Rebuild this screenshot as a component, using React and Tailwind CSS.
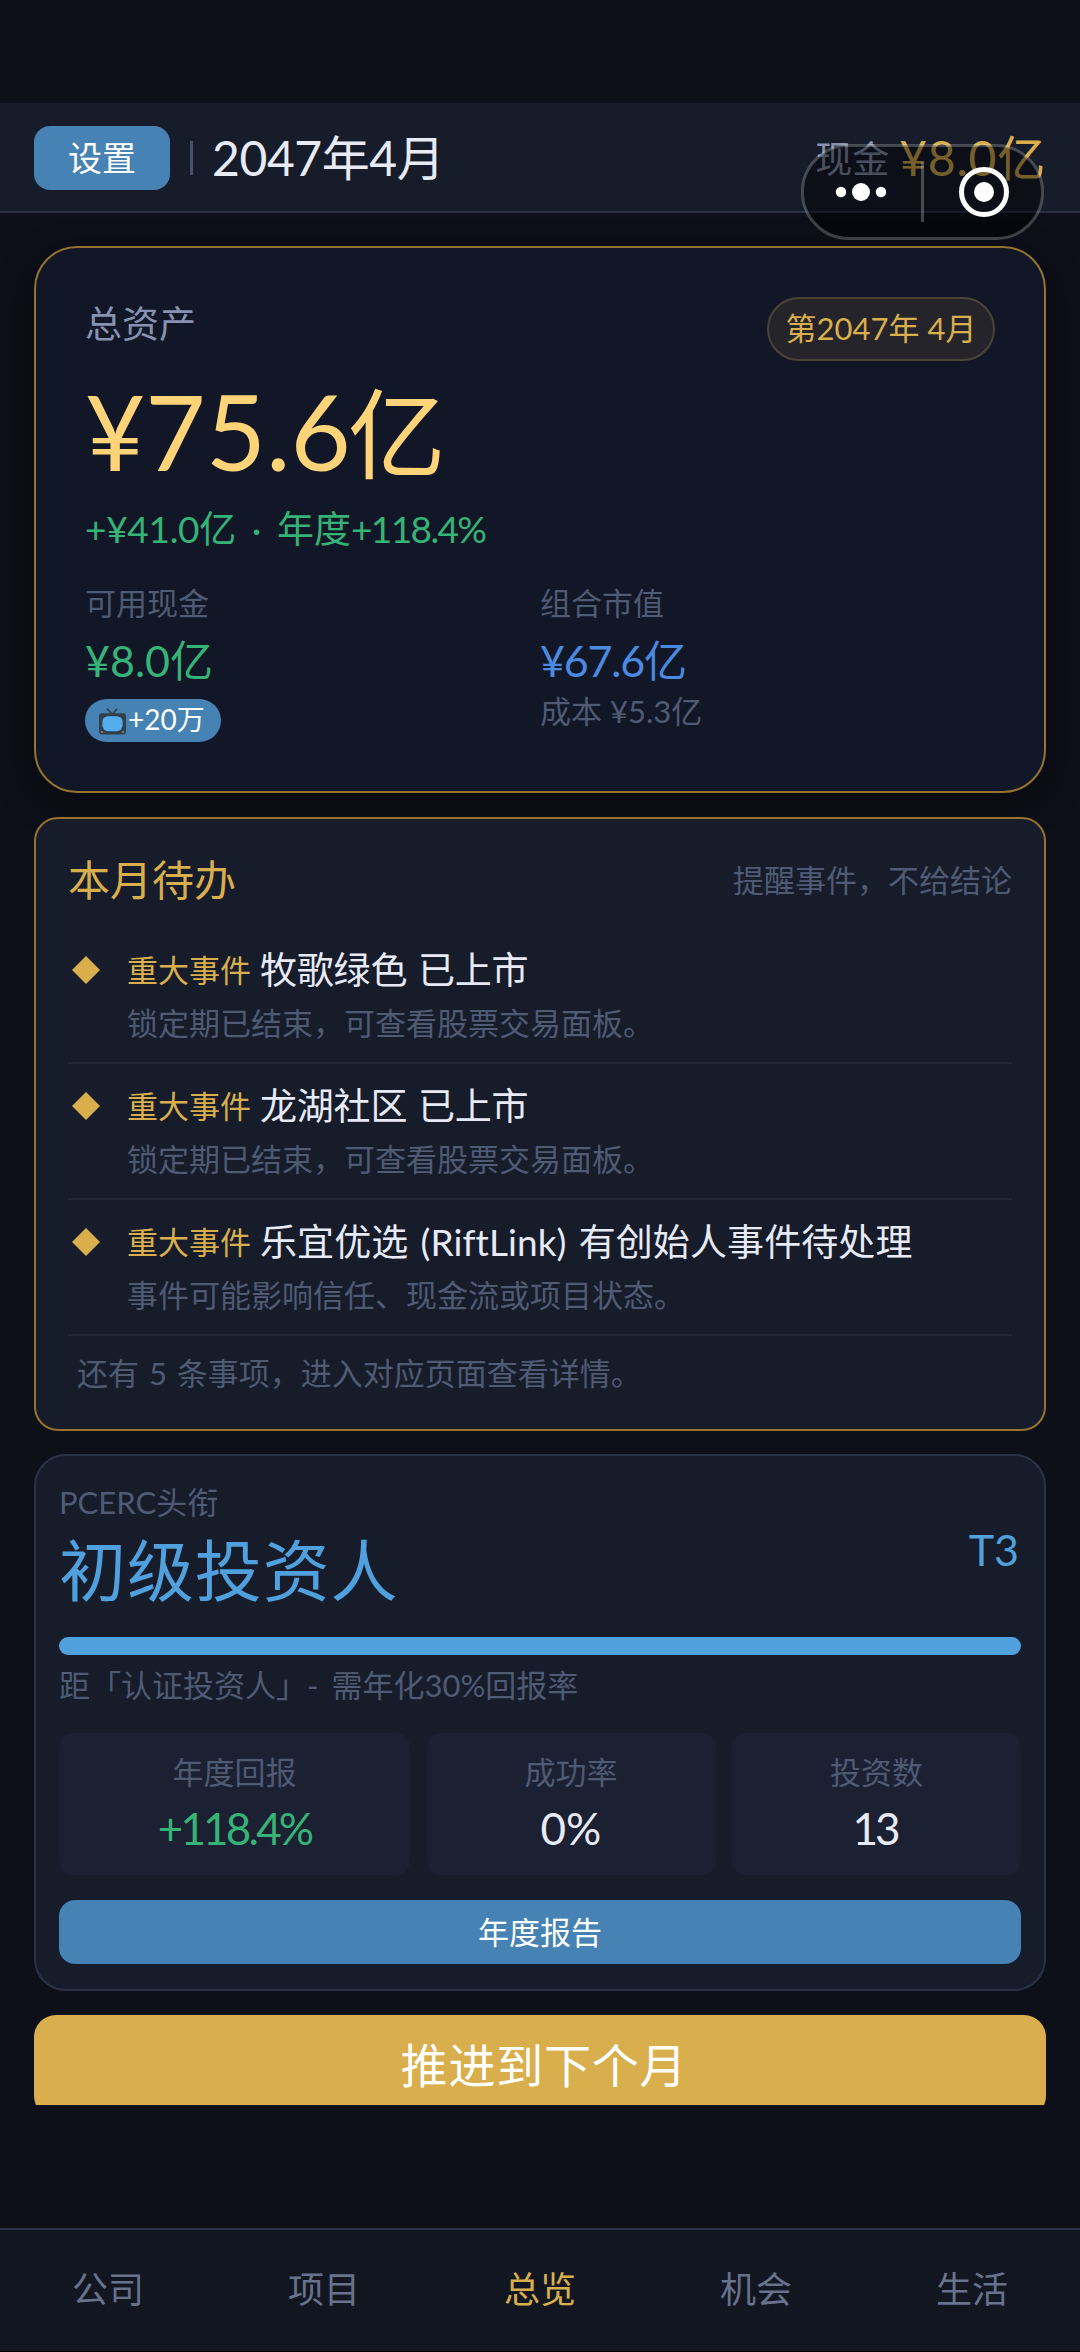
import React, { useState } from "react";

const todos = [
  {
    title: "牧歌绿色 已上市",
    desc: "锁定期已结束，可查看股票交易面板。",
    style: "tracking-[-0.2px] [word-spacing:1.5px]",
  },
  {
    title: "龙湖社区 已上市",
    desc: "锁定期已结束，可查看股票交易面板。",
    style: "tracking-[-0.2px] [word-spacing:1.5px]",
  },
  {
    title: "乐宜优选 (RiftLink) 有创始人事件待处理",
    desc: "事件可能影响信任、现金流或项目状态。",
    style: "tracking-[0.1px] [word-spacing:2.5px]",
  },
];

const stats = [
  {
    label: "年度回报",
    value: "+118.4%",
    style: "text-[#36b376] tracking-[-2.8px]",
  },
  { label: "成功率", value: "0%", style: "text-[#e8eaf6]" },
  { label: "投资数", value: "13", style: "text-[#e8eaf6] tracking-[-3px] pr-[3px]" },
];

const tabs = ["公司", "项目", "总览", "机会", "生活"];

function TvIcon() {
  return (
    <svg className="mr-0.5 h-[28px] w-[27px]" viewBox="0 0 28 28" fill="none">
      <path d="M8 1l6 6 5-6" stroke="#31404d" strokeWidth="1.6" />
      <rect x="0" y="6" width="28" height="22" rx="2.5" fill="#31404d" />
      <rect x="3.5" y="9" width="21" height="15.5" rx="6" fill="#55acee" />
      <circle cx="3" cy="25.3" r="1" fill="#a08f86" />
      <circle cx="25" cy="25.3" r="1" fill="#a08f86" />
    </svg>
  );
}

// Mini program capsule that floats over the header
function Capsule() {
  return (
    <div className="absolute left-[801px] top-[144px]">
      <svg width="243" height="96" viewBox="0 0 243 96" fill="none">
        <rect
          x="1.5"
          y="1.5"
          width="240"
          height="93"
          rx="46.5"
          fill="#000"
          fillOpacity=".45"
          stroke="#fff"
          strokeOpacity=".22"
          strokeWidth="3"
        />
        <path d="M121.5 18v60" stroke="#fff" strokeOpacity=".25" strokeWidth="3" />
        <circle cx="40" cy="48" r="5.2" fill="#fff" />
        <circle cx="60" cy="48" r="9" fill="#fff" />
        <circle cx="80" cy="48" r="5.2" fill="#fff" />
        <circle cx="183" cy="48" r="22.5" stroke="#fff" strokeWidth="5" />
        <circle cx="183" cy="48" r="10" fill="#fff" />
      </svg>
    </div>
  );
}

function Header() {
  return (
    <header className="flex h-[110px] shrink-0 items-center border-b-2 border-[#2b3247] bg-[#161c2a] px-[34px] pt-0.5">
      <button className="h-16 w-[136px] rounded-2xl bg-[#4682b4] text-[34px] leading-none text-white">
        设置
      </button>
      <span className="ml-5 h-[34px] w-[3px] bg-[#475069]" />
      <span className="ml-[19px] text-[48px] leading-none tracking-[-0.4px] text-[#e8eaf6]">
        2047年4月
      </span>
      <span className="ml-auto text-[37px] leading-none text-[#8892b0]">现金</span>
      <span className="ml-2.5 text-[48px] leading-none tracking-[0.8px] text-[#d9ae4c]">
        ¥8.0亿
      </span>
    </header>
  );
}

function AssetCard() {
  return (
    <section className="h-[547px] rounded-[43px] border-2 border-[#94732f] bg-[#111726] px-[49px] pt-[49px] shadow-[0_12px_36px_rgba(0,0,0,0.4)]">
      <div className="flex items-start justify-between">
        <span className="text-[37px] leading-[53px] text-[#8892b0]">总资产</span>
        <span className="flex h-16 w-[228px] items-center justify-center rounded-full border-2 border-[#4a4438] bg-[#25242a] pb-0.5 text-[31px] text-[#d9ae4c]">
          第2047年 4月
        </span>
      </div>
      <div className="mt-[18px] h-[104px] text-[104px] leading-[104px] text-[#ffd479]">
        ¥75.6<span className="ml-[-3px] text-[98px] leading-none">亿</span>
      </div>
      <div className="mt-[21px] flex text-[37px] leading-[50px] text-[#36b376]">
        <span className="tracking-[-0.3px]">+¥41.0亿</span>
        <span className="w-[41px] text-center">·</span>
        <span>年度</span>
        <span className="tracking-[-1.6px]">+118.4%</span>
      </div>
      <div className="mt-[28px] grid grid-cols-2">
        <div>
          <div className="text-[31px] leading-[42px] text-[#4f5a73]">可用现金</div>
          <div className="mt-2 text-[43px] leading-[58px] text-[#36b376]">¥8.0亿</div>
          <div className="mt-[9px] flex h-[43px] w-[136px] items-center rounded-full bg-[#4682b4] pl-[14px] text-[28px] leading-[41px] text-white">
            <TvIcon />
            <span className="pb-0.5">+20万</span>
          </div>
        </div>
        <div>
          <div className="text-[31px] leading-[42px] text-[#4f5a73]">组合市值</div>
          <div className="mt-2 text-[43px] leading-[58px] tracking-[-1.2px] text-[#4a8ae0]">
            ¥67.6亿
          </div>
          <div className="text-[31px] leading-[42px] text-[#4f5a73]">成本 ¥5.3亿</div>
        </div>
      </div>
    </section>
  );
}

function TodoCard() {
  return (
    <section className="mt-6 h-[614px] rounded-3xl border-2 border-[#94732f] bg-[#161c2a] px-8 pt-[31px]">
      <div className="mb-[18px] flex items-center justify-between">
        <h2 className="text-[42px] leading-[60px] text-[#d9ae4c]">本月待办</h2>
        <span className="text-[31px] leading-[60px] text-[#4f5a73]">
          提醒事件，不给结论
        </span>
      </div>
      {todos.map((todo) => (
        <div
          key={todo.title}
          className="flex h-[136px] border-b-2 border-[#1f2636] pt-[17px]"
        >
          <svg className="ml-1 mt-[11px] h-[28px] w-[28px]" viewBox="0 0 28 28">
            <path d="M14 0L28 14L14 28L0 14Z" fill="#d9ae4c" />
          </svg>
          <div className="ml-[27px]">
            <div className="flex items-center leading-[50px]">
              <span className="text-[31px] text-[#d9ae4c]">重大事件</span>
              <span className={`ml-[9px] text-[37px] text-[#e8eaf6] ${todo.style}`}>
                {todo.title}
              </span>
            </div>
            <div className="mt-[7px] text-[31px] leading-[42px] text-[#4f5a73]">
              {todo.desc}
            </div>
          </div>
        </div>
      ))}
      <div className="mt-4 pl-[9px] text-[31px] leading-[42px] text-[#4f5a73] [word-spacing:2px]">
        还有 5 条事项，进入对应页面查看详情。
      </div>
    </section>
  );
}

function RankCard() {
  return (
    <section className="mt-[23px] h-[537px] rounded-[32px] border-2 border-[#2b3247] bg-[#161c2a] px-[23px] pt-[25px]">
      <div className="flex items-start justify-between">
        <div>
          <div className="text-[31px] leading-[42px] text-[#4f5a73]">PCERC头衔</div>
          <div className="mb-0.5 mt-[9px] text-[67px] leading-[76px] tracking-[0.9px] text-[#4fa0dc]">
            初级投资人
          </div>
        </div>
        <span className="mr-0.5 mt-[42px] text-[43px] leading-[54px] text-[#4fa0dc]">
          T3
        </span>
      </div>
      <div className="mt-[27px] h-[18px] rounded-full bg-[#4fa0dc]" />
      <div className="mt-[9px] text-[31px] leading-[42px] text-[#4f5a73] [word-spacing:5px]">
        距「认证投资人」- 需年化30%回报率
      </div>
      <div className="mt-[27px] grid grid-cols-[351px_289px_289px] justify-between text-center">
        {stats.map((stat) => (
          <div key={stat.label} className="h-[142px] rounded-[14px] bg-[#1b2032] pt-[18px]">
            <div className="text-[31px] leading-[42px] text-[#4f5a73]">{stat.label}</div>
            <div className={`mt-2 text-[44px] leading-[54px] ${stat.style}`}>
              {stat.value}
            </div>
          </div>
        ))}
      </div>
      <button className="mt-[25px] h-16 w-full rounded-2xl bg-[#4682b4] text-[31px] leading-none text-white">
        年度报告
      </button>
    </section>
  );
}

export default function App() {
  const [activeTab, setActiveTab] = useState("总览");

  return (
    <div className="relative flex h-[2352px] w-[1080px] flex-col overflow-hidden bg-[#0d0f19] pt-[103px] font-['Lato','Noto_Sans_CJK_SC',sans-serif]">
      <Header />

      <main className="h-[1892px] shrink-0 overflow-hidden px-[34px] pt-[33px]">
        <AssetCard />
        <TodoCard />
        <RankCard />
        <button className="mt-6 h-[103px] w-full rounded-[22px] bg-[#d9ae4c] pb-0.5 pl-2 text-[47px] leading-none tracking-[0.8px] text-white">
          推进到下个月
        </button>
      </main>

      <nav className="mt-auto grid h-[124px] grid-cols-5 border-b border-t-2 border-b-black border-t-[#2b3247] bg-[#121620] text-center text-[36px] leading-[118px]">
        {tabs.map((tab) => (
          <span
            key={tab}
            onClick={() => setActiveTab(tab)}
            className={tab === activeTab ? "text-[#d9ae4c]" : "text-[#68728c]"}
          >
            {tab}
          </span>
        ))}
      </nav>

      <Capsule />
    </div>
  );
}
